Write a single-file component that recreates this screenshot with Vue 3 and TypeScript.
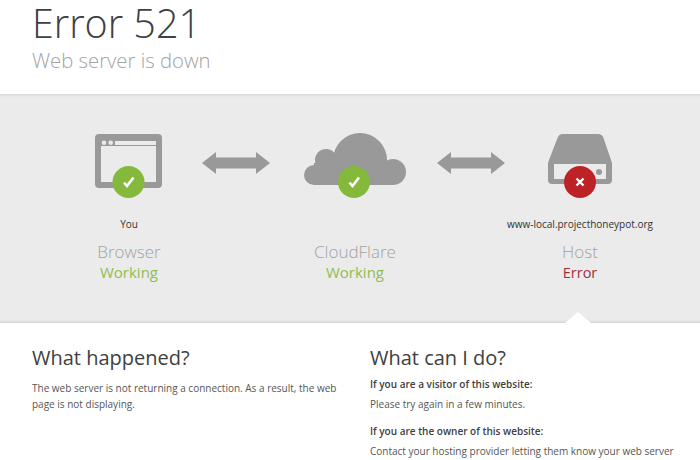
<script setup lang="ts">
interface Node {
  sub: string
  title: string
  status: string
  kind: 'browser' | 'cloud' | 'host'
}
const nodes: Node[] = [
  { sub: 'You', title: 'Browser', status: 'Working', kind: 'browser' },
  { sub: '', title: 'CloudFlare', status: 'Working', kind: 'cloud' },
  { sub: 'www-local.projecthoneypot.org', title: 'Host', status: 'Error', kind: 'host' },
]
</script>

<template>
  <div class="page">
    <header class="head">
      <h1>Error 521</h1>
      <h2>Web server is down</h2>
    </header>

    <section class="band">
      <template v-for="(n, i) in nodes" :key="n.title">
        <div class="node">
          <svg class="icon" width="110" height="66" viewBox="0 0 110 66">
            <g v-if="n.kind === 'browser'">
              <rect x="21" y="1" width="67" height="54" rx="4" fill="#999" />
              <rect x="27" y="13" width="55" height="36" fill="#ebebeb" />
              <circle cx="30" cy="9.7" r="2.3" fill="#ebebeb" />
              <circle cx="36.7" cy="9.7" r="2.3" fill="#ebebeb" />
              <rect x="41" y="8" width="41" height="4" fill="#ebebeb" />
              <circle cx="54.5" cy="49" r="16" fill="#84b93c" />
              <path d="M50 49.5 53 53 59.5 44.5" fill="none" stroke="#fff" stroke-width="2.6" />
            </g>
            <g v-else-if="n.kind === 'cloud'" transform="translate(4 0)">
              <g fill="#999">
                <circle cx="56" cy="27" r="27" />
                <circle cx="22" cy="27" r="11" />
                <circle cx="10" cy="42" r="10" />
                <circle cx="89" cy="39" r="13" />
                <rect x="10" y="30" width="79" height="22" />
              </g>
              <circle cx="50" cy="49" r="16" fill="#84b93c" />
              <path d="M45.5 49.5 48.5 53 55 44.5" fill="none" stroke="#fff" stroke-width="2.6" />
            </g>
            <g v-else transform="translate(23 0)">
              <path
                d="M15 1H50C53 1 54.500 2.500 55.500 5L63 27C64 29 64 31 64 33V47C64 49.500 62.500 51 60 51H4C1.500 51 0 49.500 0 47V33C0 31 0 29 1 27L9.500 5C10.500 2.500 12 1 15 1Z"
                fill="#999"
              />
              <rect x="6" y="31" width="52" height="15" fill="#ebebeb" />
              <circle cx="51" cy="39" r="3" fill="#999" />
              <circle cx="32" cy="49" r="16" fill="#bd2326" />
              <path d="M28.500 45.500 35.500 52.500M35.500 45.500 28.500 52.500" fill="none" stroke="#fff" stroke-width="2.4" />
            </g>
          </svg>
          <div class="sub">{{ n.sub }}</div>
          <div class="title">{{ n.title }}</div>
          <div class="status" :class="n.status === 'Error' ? 'bad' : 'ok'">{{ n.status }}</div>
        </div>
        <svg v-if="i < 2" class="arrow" width="68" height="22" viewBox="0 0 68 22">
          <path d="M0 11 14 0V5.500H54V0L68 11 54 22V16.500H14V22Z" fill="#999" />
        </svg>
      </template>
      <span class="notch"></span>
    </section>

    <section class="info">
      <div class="left">
        <h3>What happened?</h3>
        <p>The web server is not returning a connection. As a result, the web page is not displaying.</p>
      </div>
      <div class="right">
        <h3>What can I do?</h3>
        <h4>If you are a visitor of this website:</h4>
        <p>Please try again in a few minutes.</p>
        <h4 class="owner">If you are the owner of this website:</h4>
        <p>Contact your hosting provider letting them know your web server is not completing requests.</p>
      </div>
    </section>
  </div>
</template>

<style>
html,
body {
  margin: 0;
  background: #fff;
  overflow: hidden;
}
</style>

<style scoped>
.page {
  width: 700px;
  height: 460px;
  overflow: hidden;
  font-family: 'Open Sans', 'Liberation Sans', sans-serif;
  color: #404040;
}
.head {
  height: 94px;
  padding-left: 32px;
  box-sizing: border-box;
}
h1 {
  margin: 0;
  font-size: 39.5px;
  line-height: 47px;
  font-weight: 300;
  color: #404040;
}
h2 {
  margin: 0;
  font-size: 20.3px;
  line-height: 27px;
  font-weight: 300;
  color: #a3a3a3;
}
.band {
  position: relative;
  height: 229px;
  box-sizing: border-box;
  padding: 39px 0 0 54px;
  background: #ebebeb;
  display: grid;
  grid-template-columns: 150px 64px 174px 58px 160px;
  align-items: start;
  box-shadow: inset 0 4px 3px -3px rgba(0, 0, 0, 0.1), inset 0 -4px 3px -3px rgba(0, 0, 0, 0.12);
}
.node {
  display: flex;
  flex-direction: column;
  align-items: center;
}
.icon {
  display: block;
}
.arrow {
  justify-self: center;
  margin-top: 19px;
}
.sub {
  height: 16px;
  margin-top: 17px;
  font-size: 10px;
  line-height: 16px;
  color: #333;
  white-space: nowrap;
}
.title {
  margin-top: 9px;
  font-size: 17px;
  line-height: 22px;
  font-weight: 300;
  color: #a3a3a3;
}
.status {
  font-size: 15px;
  line-height: 19px;
}
.ok {
  color: #8fbd50;
}
.bad {
  color: #9c2f3a;
  font-size: 14.5px;
  line-height: 20px;
}
.notch {
  position: absolute;
  left: 565px;
  bottom: 0;
  width: 0;
  height: 0;
  border-left: 13px solid transparent;
  border-right: 13px solid transparent;
  border-bottom: 11px solid #fff;
}
.info {
  display: grid;
  grid-template-columns: 338px 310px;
  padding: 21px 0 0 32px;
}
.left {
  width: 310px;
}
h3 {
  margin: 0;
  font-size: 20px;
  line-height: 28px;
  font-weight: 400;
  color: #404040;
}
p {
  margin: 0;
  font-size: 10px;
  line-height: 16px;
  color: #555;
}
h3 + p {
  margin-top: 8px;
}
h4 {
  margin: 4px 0 4px;
  font-size: 10px;
  line-height: 16px;
  font-weight: 600;
  color: #404040;
}
.owner {
  margin-top: 11px;
}
</style>
